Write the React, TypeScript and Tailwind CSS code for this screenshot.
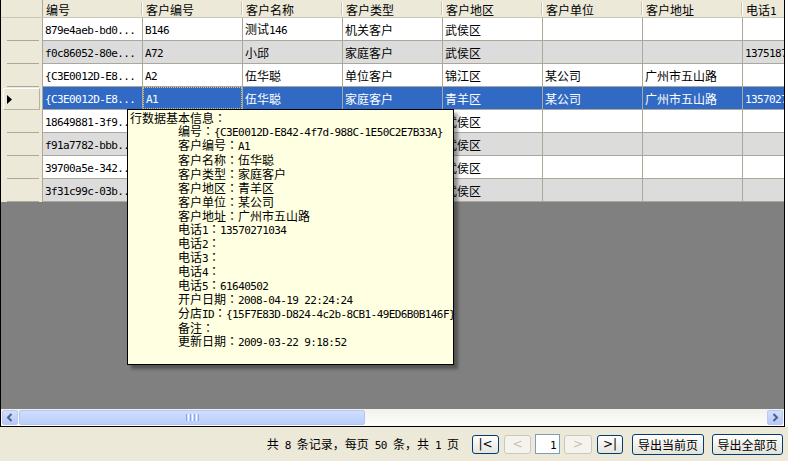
import React from "react";

const CJK_SPLIT = /([\u2E80-\u9FFF\uF900-\uFAFF\uFE30-\uFE4F\uFF00-\uFFEF]+)/;
const IS_CJK = /[\u2E80-\u9FFF\uF900-\uFAFF\uFE30-\uFE4F\uFF00-\uFFEF]/;

function T({ s }: { s: string }) {
  const parts: string[] = [];
  s.split(/(：)/).forEach((seg) => {
    if (seg === "：") parts.push(seg);
    else seg.split(CJK_SPLIT).forEach((p) => parts.push(p));
  });
  return (
    <span className="whitespace-nowrap leading-[14px]">
      {parts
        .filter((p) => p.length > 0)
        .map((p, i) =>
          p === "：" ? (
            <span key={i} className="font-['Noto_Sans_CJK_TC',sans-serif] text-[12px]">
              {p}
            </span>
          ) : IS_CJK.test(p) ? (
            <span key={i} className="font-['Noto_Sans_CJK_SC',sans-serif] text-[12px]">
              {p}
            </span>
          ) : (
            <span
              key={i}
              className="font-['DejaVu_Sans_Mono',monospace] text-[11px] tracking-[-0.6px] whitespace-pre"
            >
              {p}
            </span>
          )
        )}
    </span>
  );
}

const cols = ["编号", "客户编号", "客户名称", "客户类型", "客户地区", "客户单位", "客户地址", "电话1"];

const rows: string[][] = [
  ["879e4aeb-bd0...", "B146", "测试146", "机关客户", "武侯区", "", "", ""],
  ["f0c86052-80e...", "A72", "小邱", "家庭客户", "武侯区", "", "", "13751872698"],
  ["{C3E0012D-E8...", "A2", "伍华聪", "单位客户", "锦江区", "某公司", "广州市五山路", ""],
  ["{C3E0012D-E8...", "A1", "伍华聪", "家庭客户", "青羊区", "某公司", "广州市五山路", "13570271034"],
  ["18649881-3f9...", "", "", "", "武侯区", "", "", ""],
  ["f91a7782-bbb...", "", "", "", "武侯区", "", "", ""],
  ["39700a5e-342...", "", "", "", "武侯区", "", "", ""],
  ["3f31c99c-03b...", "", "", "", "武侯区", "", "", ""],
];

const tipLines = [
  "编号：{C3E0012D-E842-4f7d-988C-1E50C2E7B33A}",
  "客户编号：A1",
  "客户名称：伍华聪",
  "客户类型：家庭客户",
  "客户地区：青羊区",
  "客户单位：某公司",
  "客户地址：广州市五山路",
  "电话1：13570271034",
  "电话2：",
  "电话3：",
  "电话4：",
  "电话5：61640502",
  "开户日期：2008-04-19 22:24:24",
  "分店ID：{15F7E83D-D824-4c2b-8CB1-49ED6B0B146F}",
  "备注：",
  "更新日期：2009-03-22 9:18:52",
];

function Chevron({ dir }: { dir: "l" | "r" }) {
  return (
    <svg width="8" height="9" viewBox="0 0 8 9">
      <path
        d={dir === "l" ? "M5.5 1 L2 4.5 L5.5 8" : "M2.5 1 L6 4.5 L2.5 8"}
        stroke="#4D6185"
        strokeWidth="2"
        fill="none"
      />
    </svg>
  );
}

function NavBtn({ label, disabled, w, ml }: { label: string; disabled?: boolean; w: string; ml: string }) {
  return (
    <div
      className={`${w} ${ml} h-[19px] shrink-0 rounded-[3px] border flex items-center justify-center ${
        disabled
          ? "border-[#CAC8BB] text-[#C5C2B2] bg-[#F4F3EE]"
          : "border-[#003C74] text-black bg-linear-to-b from-white to-[#E6E5DE]"
      }`}
    >
      <span className="font-['DejaVu_Sans',sans-serif] text-[12px] leading-[14px] whitespace-pre">{label}</span>
    </div>
  );
}

export default function App() {
  return (
    <div className="relative w-[788px] h-[461px] bg-[#ECE9D8] flex flex-col overflow-hidden text-black">
      <div className="flex h-[427px] shrink-0 bg-white">
        <div className="w-[785px] h-full border-l border-r border-b border-black flex flex-col">
          <div className="flex-1 bg-[#808080] overflow-hidden flex flex-col">
            {/* header */}
            <div className="flex h-[18px] shrink-0 bg-[#ECE9D8] border-b border-[#CBC7B8]">
              <div className="w-[42px] shrink-0 border-r border-[#ACA899]" />
              {cols.map((c) => (
                <div key={c} className="w-[100px] shrink-0 flex items-center">
                  <div className="flex-1 pl-[3px] overflow-hidden">
                    <T s={c} />
                  </div>
                  <div className="w-[1px] h-[13px] bg-[#C7C5B2]" />
                  <div className="w-[1px] h-[13px] bg-white" />
                </div>
              ))}
            </div>
            {/* rows */}
            {rows.map((r, i) => {
              const sel = i === 3;
              const rowBg = sel ? "bg-[#316AC5] text-white" : i % 2 === 1 ? "bg-[#DCDCDC]" : "bg-white";
              return (
                <div key={i} className="flex h-[23px] shrink-0">
                  <div className="w-[42px] shrink-0 bg-[#ECE9D8] border-r border-[#ACA899] flex flex-col">
                    <div className="flex-1 flex items-start">
                      {sel && (
                        <div className="ml-[2px] mt-[1px] w-[37px] h-[22px] border border-t-white border-l-white border-r-[#B5B2A2] border-b-[#B5B2A2] flex items-center pl-[3px]">
                          <svg width="5" height="9" viewBox="0 0 5 9">
                            <polygon points="0,0 5,4.5 0,9" fill="black" />
                          </svg>
                        </div>
                      )}
                    </div>
                    {!sel && <div className="ml-[6px] w-[32px] h-[1px] shrink-0 bg-[#ACA899]" />}
                  </div>
                  {r.map((v, j) =>
                    sel && j === 1 ? (
                      <div key={j} className={`w-[100px] shrink-0 border-r border-b border-[#ACA899] overflow-hidden ${rowBg}`}>
                        <div className="w-full h-full border border-dotted border-[#E9C46A] flex items-center pl-[2px]">
                          <T s={v} />
                        </div>
                      </div>
                    ) : (
                      <div
                        key={j}
                        className={`w-[100px] shrink-0 border-r border-b border-[#ACA899] flex items-center pl-[2px] overflow-hidden ${rowBg}`}
                      >
                        <T s={v} />
                      </div>
                    )
                  )}
                </div>
              );
            })}
          </div>
          {/* horizontal scrollbar */}
          <div className="h-[17px] shrink-0 flex items-stretch bg-linear-to-b from-[#F3F1EC] to-[#FEFEFB] px-[1px] pt-[1px] pb-[1px]">
            <div className="w-[16px] shrink-0 rounded-[2px] border border-[#B7CAF5] bg-linear-to-b from-[#D2DEFD] to-[#B6C9F8] flex items-center justify-center">
              <Chevron dir="l" />
            </div>
            <div className="ml-[1px] w-[346px] shrink-0 rounded-[2px] border border-[#B3C7F5] bg-linear-to-b from-[#D0DDFE] to-[#BACEFB] flex items-center justify-center gap-[1px]">
              <div className="w-[1px] h-[7px] bg-[#8BA8EE]" />
              <div className="w-[1px] h-[7px] bg-white" />
              <div className="w-[1px] h-[7px] bg-[#8BA8EE]" />
              <div className="w-[1px] h-[7px] bg-white" />
              <div className="w-[1px] h-[7px] bg-[#8BA8EE]" />
              <div className="w-[1px] h-[7px] bg-white" />
              <div className="w-[1px] h-[7px] bg-[#8BA8EE]" />
            </div>
            <div className="flex-1" />
            <div className="w-[16px] shrink-0 rounded-[2px] border border-[#B7CAF5] bg-linear-to-b from-[#D2DEFD] to-[#B6C9F8] flex items-center justify-center">
              <Chevron dir="r" />
            </div>
          </div>
        </div>
      </div>

      {/* pager */}
      <div className="flex-1 flex items-center justify-end pr-[5px]">
        <T s="共 8 条记录，每页 50 条，共 1 页" />
        <NavBtn label="|<" w="w-[27px]" ml="ml-[13px]" />
        <NavBtn label="<" disabled w="w-[27px]" ml="ml-[5px]" />
        <div className="ml-[4px] w-[25px] h-[20px] shrink-0 border border-[#7F9DB9] bg-white flex items-center justify-end pr-[3px]">
          <T s="1" />
        </div>
        <NavBtn label=">" disabled w="w-[28px]" ml="ml-[4px]" />
        <NavBtn label=">|" w="w-[26px]" ml="ml-[5px]" />
        <div className="ml-[9px] w-[72px] h-[21px] shrink-0 rounded-[3px] border border-[#003C74] bg-linear-to-b from-white to-[#E3E2DA] flex items-center justify-center">
          <T s="导出当前页" />
        </div>
        <div className="ml-[8px] w-[71px] h-[21px] shrink-0 rounded-[3px] border border-[#003C74] bg-linear-to-b from-white to-[#E3E2DA] flex items-center justify-center">
          <T s="导出全部页" />
        </div>
      </div>

      {/* tooltip */}
      <div className="absolute left-[127px] top-[109px] w-[327px] h-[256px] bg-[#FFFFE1] border border-black shadow-[4px_4px_3px_rgba(0,0,0,0.35)]">
        <div className="h-[14px] pl-[2px] flex items-center">
          <T s="行数据基本信息：" />
        </div>
        {tipLines.map((l) => (
          <div key={l} className="h-[14px] pl-[50px] flex items-center">
            <T s={l} />
          </div>
        ))}
      </div>
    </div>
  );
}
